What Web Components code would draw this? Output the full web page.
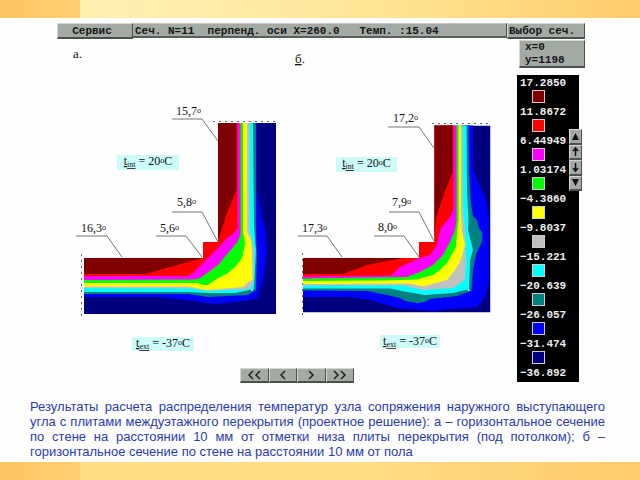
<!DOCTYPE html>
<html lang="ru">
<head>
<meta charset="utf-8">
<title>Распределение температур</title>
<style>
html, body { margin: 0; min-height: 100%; background: #fefefe; }
</style>
</head>
<body>
<thermal-slide></thermal-slide>
<script>
const define = (name, html, init) => {
  const template = document.createElement('template');
  template.innerHTML = html;
  customElements.define(name, class extends HTMLElement {
    constructor() {
      super();
      this.attachShadow({ mode: 'open' }).append(template.content.cloneNode(true));
    }
    connectedCallback() { if (init) init(this, this.shadowRoot); }
  });
};

define('slide-band', `
<style>
:host { display: grid; grid-template-columns: 12.5% 1fr; height: 18px; }
.dark { background: linear-gradient(90deg, #ffc55f, #ffcf70); }
.light { background: linear-gradient(90deg, var(--from, #fff0b4), var(--mid, #ffe697) 50%, #ffcc69); }
</style>
<div class="dark"></div><div class="light"></div>`);

define('dos-button', `
<style>
:host { display: block; }
button { display: block; width: 100%; height: 100%; box-sizing: border-box; margin: 0; padding: var(--pad, 0 2px);
  background: #a3a9a3; border: 1px solid; border-color: #d4d7d4 #4c504c #4c504c #d4d7d4; border-bottom-width: 2px;
  color: #161616; font: inherit; text-align: center; white-space: pre; line-height: 12px; }
</style>
<button type="button"><slot></slot></button>`, (el, root) => {
  if (el.hasAttribute('label')) root.querySelector('button').setAttribute('aria-label', el.getAttribute('label'));
});

define('tool-bar', `
<style>
:host { display: grid; grid-template-columns: 76px 1fr 78px; height: 16px; }
.status { box-sizing: border-box; background: #a3a9a3; border-bottom: 2px solid #5b5f5b; border-right: 1px solid #4c504c; border-top: 1px solid #c4c8c4;
  padding-left: 2px; margin-bottom: 1px; white-space: pre; line-height: 14px; overflow: hidden; color: #161616; }
.service { --pad: 0 8px 0 2px; }
.section { --pad: 0 8px 0 0; }
</style>
<dos-button class="service">Сервис</dos-button>
<div class="status">Сеч. N=11  перпенд. оси X=260.0   Темп. :15.04</div>
<dos-button class="section">Выбор сеч.</dos-button>`);

define('coord-panel', `
<style>
:host { display: block; box-sizing: border-box; height: 28px; padding: 0 5px; background: #a3a9a3; border: 1px solid;
  border-color: #d4d7d4 #4c504c #4c504c #d4d7d4; border-bottom-width: 2px; line-height: 13px; color: #161616; }
</style>
<div>x=0</div><div>y=1198</div>`);

define('scale-steps', `
<style>
:host { display: grid; grid-template-rows: repeat(4, 1fr); width: 13px; height: 62px; --pad: 0; }
svg { display: block; margin: 0 auto; }
</style>
<dos-button label="В начало"><svg width="9" height="11" viewBox="0 0 9 11"><path d="M4.500 2 8 9H1z" fill="#111"/></svg></dos-button>
<dos-button label="Вверх"><svg width="9" height="11" viewBox="0 0 9 11"><path d="M4.500 10V2M2 5 4.500 2 7 5" fill="none" stroke="#111" stroke-width="1.500"/></svg></dos-button>
<dos-button label="Вниз"><svg width="9" height="11" viewBox="0 0 9 11"><path d="M4.500 1V9M2 6 4.500 9 7 6" fill="none" stroke="#111" stroke-width="1.500"/></svg></dos-button>
<dos-button label="В конец"><svg width="9" height="11" viewBox="0 0 9 11"><path d="M1 2H8L4.500 9z" fill="#111"/></svg></dos-button>`);

define('color-scale', `
<style>
:host { display: block; position: relative; background: #000; color: #eee; width: 62px; }
ul { list-style: none; margin: 0; padding: 2px 0 2px 3px; }
li { height: 29px; line-height: 13px; }
li:last-child { height: 13px; }
i { display: block; box-sizing: border-box; width: 13px; height: 13px; margin-left: 12px; border: 1px solid #ccc; background: var(--c); }
scale-steps { position: absolute; right: -3px; top: 54px; }
</style>
<ul></ul><scale-steps></scale-steps>`, (el, root) => {
  const rows = [['17.2850', '#800000'], ['11.8672', '#f00'], ['6.44949', '#f0f'], ['1.03174', '#0f0'], ['−4.3860', '#ff0'],
    ['−9.8037', '#c0c0c0'], ['−15.221', '#0ff'], ['−20.639', '#008080'], ['−26.057', '#00f'], ['−31.474', '#000080'], ['−36.892']];
  root.querySelector('ul').innerHTML = rows.map(([t, c]) => `<li>${t}${c ? `<i style="--c:${c}"></i>` : ''}</li>`).join('');
});

const figures = {
  a: {
    box: '75 45 215 310',
    title: [73, 58, 'а', false],
    outline: 'M218 123H276V314H84V258H203V242H218Z',
    corner: '84,123',
    bands: [
      ['#00f', '257,123 257,190 262,218 265,230 267,253 263,280 257,298 250,300 235,302 215,304 188,300 158,297 84,297'],
      ['#008080', '256,123 256,220 256,240 257,253 256,290 248,295 208,297 188,294 84,294'],
      ['#0ff', '253,123 254,225 255,240 256,250 254,289 235,293 208,293 188,292 84,292'],
      ['#c0c0c0', '249.500,123 249.500,230 252,240 254,250 253.500,282 250,289 208,291 192,288.500 84,288'],
      ['#ff0', '247,123 247,232 251.500,242 252.500,280 248,282 243,287 207,290 188,286.500 84,286.500'],
      ['#0f0', '243,123 243,232 245.500,243 242,258 236,266 228,273 215,280 208,285 203,285 198,283 84,283'],
      ['#f0f', '240.500,123 240.500,235 237.500,242 228,253 218,265 210,271 200,278 195,279.500 84,280'],
      ['#f00', '237.500,123 237.500,228 234,233 227,238 218,248 205,261 193,273 188,276 84,276'],
      ['#800000', '236.500,123 236.500,190 227,213 219,238 217,241 202,241 202,258 172,266.500 145,274 84,274']
    ],
    lines: ['172,119 202,119 218,141', '172,212 202,212 218,242', '156,236 186,236 202,257', '76,236 107,236 122,257'],
    texts: [[176, 115, '15,7'], [177, 206, '5,8'], [160, 232, '5,6'], [81, 232, '16,3']],
    ticks: 'M213 121.500H278M81.500 254V319',
    chips: [[117, 155, 62, 15, 'int', '20'], [132, 337, 62, 14, 'ext', '-37']],
    probe: [252, 290]
  },
  b: {
    box: '290 45 215 310',
    title: [295, 63, 'б', true],
    outline: 'M434.500 125.500H490.500V312.500H303V258H419V242H434.500Z',
    corner: '303,125',
    bands: [
      ['#00f', '473,125 473,168 478,182 486,200 489,220 489,280 485,298 477,307 450,309 433,311 397,308 370,300 350,297 303,297'],
      ['#008080', '468.500,125 469,170 471,203 473,216 477,220 479,228 482.500,233 482,242 476.500,253 473,270 471.500,291 457,296 430,299 425,302 417,303 405,301 400,298 387,295 367,291 303,290.500'],
      ['#0ff', '466.500,125 467,190 468.500,220 468,230 473,250 470,260 469,289 453,293 425,295 407,292 390,288.500 303,288.500'],
      ['#c0c0c0', '462.500,125 463,210 465,230 466,260 465,280 453,288 423,290 403,285.500 303,285.500'],
      ['#ff0', '461,125 461,210 461.500,230 465,245 460,262 455,270 447,280 423,286.500 410,283.500 303,284'],
      ['#0f0', '458.500,125 458.500,220 457,233 456,247 447,263 440,270 433,275 417,279.500 383,280.500 303,281'],
      ['#f0f', '456.500,125 456.500,220 455,230 450,242 443,255 433,265 420,272 407,277 303,278.500'],
      ['#f00', '453.500,125 453.500,208 450,217 441.500,227 436,247 430,255 420,258 400,267 391,275.500 303,276.500'],
      ['#800000', '452.500,125 452.500,172 443,197 436,218 434,241 418,241 418,257 403,258 367,265 343,274 303,274']
    ],
    lines: ['388,127 419,127 434,148', '389,212 419,212 434,241', '374,236 404,236 419,257', '298,236 327,236 342,257'],
    texts: [[393, 122, '17,2'], [392, 206, '7,9'], [378, 231, '8,0'], [302, 232, '17,3']],
    ticks: 'M432 123.500H492M302.500 253V317',
    chips: [[336, 157, 61, 15, 'int', '20'], [380, 335, 60, 13, 'ext', '-37']],
    probe: [468.500, 290]
  }
};

define('heat-figure', `
<style>
:host { display: block; font-family: "Liberation Serif", serif; font-weight: normal; }
svg { display: block; width: 100%; height: auto; overflow: visible; }
text { font-size: 12px; fill: #111; }
.title { font-size: 13px; }
.deg, .sub { font-size: 8px; }
.u { text-decoration: underline; }
polyline { fill: none; stroke: #777; stroke-width: 1; }
</style>
<svg role="img" aria-label="Температурное поле узла"></svg>`, (el, root) => {
  const f = figures[el.getAttribute('kind')], svg = root.querySelector('svg');
  svg.setAttribute('viewBox', f.box);
  const [tx, ty, title, under] = f.title;
  svg.innerHTML = `
    <clipPath id="wall"><path d="${f.outline}"/></clipPath>
    <text class="title" x="${tx}" y="${ty}"><tspan class="${under ? 'u' : ''}">${title}</tspan>.</text>
    <g clip-path="url(#wall)">
      <path d="${f.outline}" fill="#000080"/>
      ${f.bands.map(([c, p]) => `<polygon points="${p} ${f.corner}" fill="${c}"/>`).join('')}
      <circle cx="${f.probe[0]}" cy="${f.probe[1]}" r="1" fill="#c8e8e0"/>
    </g>
    <path d="${f.ticks}" stroke="#667" stroke-dasharray="2 4" fill="none"/>
    ${f.lines.map(p => `<polyline points="${p}"/>`).join('')}
    ${f.texts.map(([x, y, t]) => `<text x="${x}" y="${y}">${t}<tspan class="deg" dy="-2">о</tspan></text>`).join('')}
    ${f.chips.map(([x, y, w, h, s, v]) => `<rect x="${x}" y="${y}" width="${w}" height="${h}" fill="#ccfbfa"/>
      <text x="${x + w / 2}" y="${y + 10}" text-anchor="middle"><tspan class="u">t</tspan><tspan class="sub u" dy="2">${s}</tspan><tspan dy="-2"> = ${v}</tspan><tspan class="deg" dy="-2">о</tspan><tspan dy="2">С</tspan></text>`).join('')}`;
});

define('section-nav', `
<style>
:host { display: grid; grid-template-columns: repeat(4, 1fr); width: 114px; height: 15px; --pad: 0; }
svg { display: block; margin: 0 auto; fill: none; stroke: #222; stroke-width: 1.500; }
</style>
<dos-button label="Первое"><svg width="16" height="12" viewBox="0 0 16 12"><path d="M7 2 3 6 7 10M14 2 10 6 14 10"/></svg></dos-button>
<dos-button label="Назад"><svg width="16" height="12" viewBox="0 0 16 12"><path d="M10 2 6 6 10 10"/></svg></dos-button>
<dos-button label="Вперёд"><svg width="16" height="12" viewBox="0 0 16 12"><path d="M6 2 10 6 6 10"/></svg></dos-button>
<dos-button label="Последнее"><svg width="16" height="12" viewBox="0 0 16 12"><path d="M2 2 6 6 2 10M9 2 13 6 9 10"/></svg></dos-button>`);

define('slide-caption', `
<style>
:host { display: block; padding: 0 35px 0 30px; color: #2b3bb0; font: 13px/15px "Liberation Sans", sans-serif; text-align: justify; }
p { margin: 0; }
</style>
<p><slot></slot></p>`);

define('thermal-slide', `
<style>
:host { display: flex; flex-direction: column; min-height: 100vh; font: bold 11px/13px "Liberation Mono", monospace; }
tool-bar { margin: 5px 55px 0 57px; }
.work { display: grid; grid-template-columns: 1fr 68px; gap: 12px; padding: 0 55px 0 75px; }
.plots { display: grid; grid-template-columns: 1fr 1fr; padding-top: 6px; }
.side { display: grid; align-content: start; gap: 7px; padding-top: 1px; }
coord-panel { margin-left: 2px; }
.nav { display: flex; justify-content: center; padding: 13px 0 0 14px; }
slide-caption { margin-top: 16px; }
.foot { margin-top: auto; --from: #ffdc84; --mid: #ffdc84; }
</style>
<slide-band></slide-band>
<tool-bar></tool-bar>
<div class="work">
  <div>
    <div class="plots"><heat-figure kind="a"></heat-figure><heat-figure kind="b"></heat-figure></div>
    <div class="nav"><section-nav></section-nav></div>
  </div>
  <div class="side"><coord-panel></coord-panel><color-scale></color-scale></div>
</div>
<slide-caption>Результаты расчета распределения температур узла сопряжения наружного выступающего угла с плитами междуэтажного перекрытия (проектное решение): а – горизонтальное сечение по стене на расстоянии 10 мм от отметки низа плиты перекрытия (под потолком); б – горизонтальное сечение по стене на расстоянии 10 мм от пола</slide-caption>
<slide-band class="foot"></slide-band>`);
</script>
</body>
</html>
